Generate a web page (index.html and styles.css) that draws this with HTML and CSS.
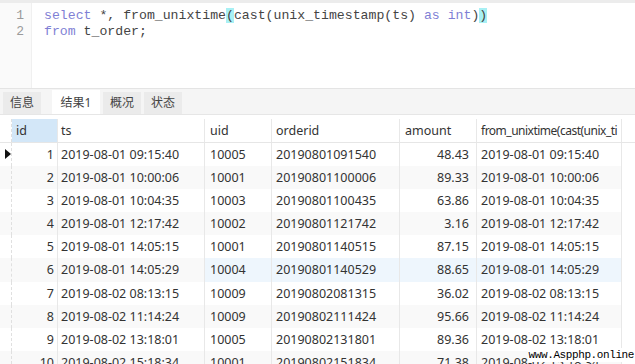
FILE: index.html
```html
<!DOCTYPE html>
<html>
<head>
<meta charset="utf-8">
<link rel="stylesheet" href="styles.css">
</head>
<body>
<div class="app">
  <div class="editor">
    <div class="gutter">
      <div class="ln">1</div>
      <div class="ln">2</div>
    </div>
    <div class="code">
      <div class="line"><span class="kw">select</span> *, from_unixtime<span class="br">(</span>cast(unix_timestamp(ts) <span class="kw">as</span> <span class="kw">int</span>)<span class="br">)</span></div>
      <div class="line"><span class="kw">from</span> t_order;</div>
    </div>
  </div>
  <div class="tabs">
    <div class="tab">信息</div>
    <div class="tab active">结果1</div>
    <div class="tab">概况</div>
    <div class="tab">状态</div>
  </div>
  <div class="grid">
    <div class="row head">
      <div class="c ind"></div>
      <div class="c id sel">id</div>
      <div class="c ts">ts</div>
      <div class="c uid">uid</div>
      <div class="c oid">orderid</div>
      <div class="c amt l">amount</div>
      <div class="c fu tight">from_unixtime(cast(unix_ti</div>
      <div class="c rest"></div>
    </div>
    <div class="row"><div class="c ind"><span class="arrow"></span></div><div class="c id">1</div><div class="c ts">2019-08-01 09:15:40</div><div class="c uid">10005</div><div class="c oid">20190801091540</div><div class="c amt">48.43</div><div class="c fu">2019-08-01 09:15:40</div><div class="c rest"></div></div>
    <div class="row"><div class="c ind"></div><div class="c id">2</div><div class="c ts">2019-08-01 10:00:06</div><div class="c uid">10001</div><div class="c oid">20190801100006</div><div class="c amt">89.33</div><div class="c fu">2019-08-01 10:00:06</div><div class="c rest"></div></div>
    <div class="row"><div class="c ind"></div><div class="c id">3</div><div class="c ts">2019-08-01 10:04:35</div><div class="c uid">10003</div><div class="c oid">20190801100435</div><div class="c amt">63.86</div><div class="c fu">2019-08-01 10:04:35</div><div class="c rest"></div></div>
    <div class="row"><div class="c ind"></div><div class="c id">4</div><div class="c ts">2019-08-01 12:17:42</div><div class="c uid">10002</div><div class="c oid">20190801121742</div><div class="c amt">3.16</div><div class="c fu">2019-08-01 12:17:42</div><div class="c rest"></div></div>
    <div class="row"><div class="c ind"></div><div class="c id">5</div><div class="c ts">2019-08-01 14:05:15</div><div class="c uid">10001</div><div class="c oid">20190801140515</div><div class="c amt">87.15</div><div class="c fu">2019-08-01 14:05:15</div><div class="c rest"></div></div>
    <div class="row hover"><div class="c ind"></div><div class="c id">6</div><div class="c ts">2019-08-01 14:05:29</div><div class="c uid">10004</div><div class="c oid">20190801140529</div><div class="c amt">88.65</div><div class="c fu">2019-08-01 14:05:29</div><div class="c rest"></div></div>
    <div class="row"><div class="c ind"></div><div class="c id">7</div><div class="c ts">2019-08-02 08:13:15</div><div class="c uid">10009</div><div class="c oid">20190802081315</div><div class="c amt">36.02</div><div class="c fu">2019-08-02 08:13:15</div><div class="c rest"></div></div>
    <div class="row"><div class="c ind"></div><div class="c id">8</div><div class="c ts">2019-08-02 11:14:24</div><div class="c uid">10009</div><div class="c oid">20190802111424</div><div class="c amt">95.66</div><div class="c fu">2019-08-02 11:14:24</div><div class="c rest"></div></div>
    <div class="row"><div class="c ind"></div><div class="c id">9</div><div class="c ts">2019-08-02 13:18:01</div><div class="c uid">10005</div><div class="c oid">20190802131801</div><div class="c amt">89.36</div><div class="c fu">2019-08-02 13:18:01</div><div class="c rest"></div></div>
    <div class="row"><div class="c ind"></div><div class="c id">10</div><div class="c ts">2019-08-02 15:18:34</div><div class="c uid">10001</div><div class="c oid">20190802151834</div><div class="c amt">71.38</div><div class="c fu">2019-08-02 15:18:34</div><div class="c rest"></div></div>
  </div>
  <div class="watermark">www.Aspphp.online</div>
</div>
</body>
</html>
```
FILE: styles.css
```css
* { box-sizing: border-box; }
html, body { margin: 0; padding: 0; background: #fff; }
.app {
  width: 635px;
  height: 364px;
  overflow: hidden;
  position: relative;
  font-family: "Noto Sans", "Noto Sans CJK SC", sans-serif;
  font-size: 12.5px;
  color: #333;
  background: #fff;
}
.editor {
  height: 89px;
  display: flex;
  border-top: 3px solid #ececec;
  border-bottom: 1px solid #e4e4e4;
  background: #fff;
}
.gutter {
  width: 32px;
  background: #fafafa;
  border-right: 1px solid #f0f0f0;
  padding-top: 5px;
  font-family: "Liberation Mono", monospace;
  font-size: 13px;
  color: #9a9a9a;
}
.ln { height: 16px; line-height: 16px; text-align: right; padding-right: 7px; }
.code {
  padding-top: 5px;
  padding-left: 12px;
  font-family: "Liberation Mono", monospace;
  font-size: 13.2px;
  color: #444;
}
.line { height: 16px; line-height: 16px; white-space: pre; }
.kw { color: #7f7fd5; }
.br { background: #a8f0f4; }
.tabs {
  height: 26px;
  display: flex;
  align-items: flex-end;
  gap: 3px;
  padding-left: 3px;
  background: #f5f5f5;
  border-bottom: 1px solid #e6e6e6;
}
.tab {
  height: 22px;
  line-height: 22px;
  padding: 0 6px;
  background: #ebebeb;
  color: #444;
  font-size: 12px;
  min-width: 38px;
  text-align: center;
}
.tab.active { background: #fff; height: 24px; line-height: 26px; width: 48px; margin-left: 8px; }
.grid { display: flex; flex-direction: column; padding-top: 4px; }
.row { display: flex; height: 23.1px; line-height: 23px; }
.row:nth-child(odd) { background: #f9f9f9; }
.row.head { background: #fff; height: 24px; border-bottom: 1px solid #e6e6e6; }
.row.hover .oid, .row.hover .amt, .row.hover .fu, .row.hover .uid { background: #eef6fd; }
.c { border-right: 1px solid #e8e8e8; white-space: nowrap; overflow: hidden; padding: 0 3px; }
.ind { width: 12px; padding: 0; position: relative; border-right: 1px dashed #e0e0e0; }
.arrow {
  position: absolute; left: 5px; top: 6px;
  width: 0; height: 0;
  border-top: 5px solid transparent;
  border-bottom: 5px solid transparent;
  border-left: 6px solid #111;
}
.id { width: 46px; text-align: right; }
.head .id { text-align: left; padding-left: 4px; }
.id.sel { background: #d3e7f8; }
.ts { width: 147px; }
.uid { width: 67px; padding-left: 5px; }
.oid { width: 128px; padding-left: 4px; }
.amt { width: 77px; text-align: right; padding-right: 7px; }
.amt.l { text-align: left; padding-left: 5px; }
.fu { width: 145px; padding-left: 4px; }
.fu.tight { font-size: 12px; letter-spacing: -0.5px; padding-right: 0; }
.rest { flex: 1; border-right: none; background: #fff; }
.watermark {
  position: absolute;
  right: 0; bottom: 2px;
  background: #fff;
  font-family: "Liberation Mono", monospace;
  font-size: 11px;
  letter-spacing: -0.4px;
  color: #000;
  padding: 0 1px;
  line-height: 14px;
}
```
